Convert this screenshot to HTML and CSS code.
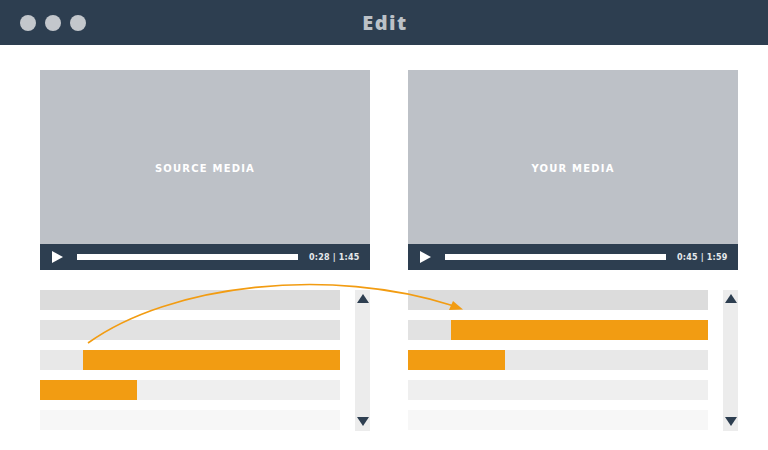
FILE: index.html
```html
<!DOCTYPE html>
<html>
<head>
<meta charset="utf-8">
<link rel="stylesheet" href="styles.css">
</head>
<body>
<div class="window">
  <header class="titlebar">
    <div class="dots"><span class="dot"></span><span class="dot"></span><span class="dot"></span></div>
    <div class="title">Edit</div>
  </header>
  <main class="content">
    <section class="panel">
      <div class="video">
        <div class="screen"><span class="label">SOURCE MEDIA</span></div>
        <div class="controls">
          <span class="play"></span>
          <span class="progress"></span>
          <span class="time">0:28 | 1:45</span>
        </div>
      </div>
      <div class="tracks">
        <div class="rows">
          <div class="row r1"></div>
          <div class="row r2"></div>
          <div class="row r3"><span class="clip" style="margin-left:43px;width:257px"></span></div>
          <div class="row r4"><span class="clip" style="width:97px"></span></div>
          <div class="row r5"></div>
        </div>
        <div class="scrollbar"><span class="arrow up"></span><span class="arrow down"></span></div>
      </div>
    </section>
    <section class="panel">
      <div class="video">
        <div class="screen"><span class="label">YOUR MEDIA</span></div>
        <div class="controls">
          <span class="play"></span>
          <span class="progress"></span>
          <span class="time">0:45 | 1:59</span>
        </div>
      </div>
      <div class="tracks">
        <div class="rows">
          <div class="row r1"></div>
          <div class="row r2"><span class="clip" style="margin-left:43px;width:257px"></span></div>
          <div class="row r3"><span class="clip" style="width:97px"></span></div>
          <div class="row r4"></div>
          <div class="row r5"></div>
        </div>
        <div class="scrollbar"><span class="arrow up"></span><span class="arrow down"></span></div>
      </div>
    </section>
  </main>
  <svg class="link" width="768" height="450" viewBox="0 0 768 450">
    <path d="M88 343 C170 284 330 266 454 306" fill="none" stroke="#f29c12" stroke-width="1.6"/>
    <path d="M463 309.5 L449 310 L453 301 Z" fill="#f29c12"/>
  </svg>
</div>
</body>
</html>
```
FILE: styles.css
```css
* { box-sizing: border-box; }
html, body { margin: 0; padding: 0; background: #ffffff; }
body { width: 768px; height: 450px; overflow: hidden; font-family: "DejaVu Sans", "Liberation Sans", sans-serif; }

.window { position: relative; width: 768px; height: 450px; }

.titlebar {
  height: 45px;
  background: #2d3e50;
  display: flex;
  align-items: center;
  position: relative;
}
.dots { display: flex; gap: 9px; padding-left: 20px; }
.dot { width: 16px; height: 16px; border-radius: 50%; background: #c3c7cc; }
.title {
  position: absolute;
  left: 0; right: 0; top: 0; bottom: 0;
  display: flex; align-items: center; justify-content: center;
  color: #bcc1c7;
  font-family: "Open Sans", "DejaVu Sans", sans-serif;
  font-weight: 800;
  font-size: 20px;
  letter-spacing: 1.5px;
  padding-left: 2px;
}

.content {
  display: flex;
  gap: 38px;
  padding: 25px 30px 0 40px;
}
.panel { width: 330px; display: flex; flex-direction: column; gap: 20px; }

.video { height: 200px; display: flex; flex-direction: column; }
.screen {
  flex: 1;
  background: #bdc1c7;
  display: flex;
  align-items: center;
  justify-content: center;
  padding-top: 22px;
}
.label {
  color: #ffffff;
  font-weight: 700;
  font-size: 10px;
  letter-spacing: 1.2px;
}
.controls {
  height: 26px;
  background: #2d3e50;
  display: flex;
  align-items: center;
  padding: 0 10px 0 12px;
}
.play {
  width: 0; height: 0;
  border-top: 6.5px solid transparent;
  border-bottom: 6.5px solid transparent;
  border-left: 11px solid #ffffff;
  margin-right: 14px;
}
.progress { width: 221px; height: 6px; background: #ffffff; margin-right: 11px; flex-shrink: 0; }
.time {
  color: #e6e9ec;
  font-size: 8px;
  font-weight: 700;
  letter-spacing: 0.2px;
  white-space: nowrap;
}

.tracks { display: flex; gap: 15px; }
.rows { width: 300px; display: flex; flex-direction: column; gap: 10px; }
.row { height: 20px; display: flex; }
.r1 { background: #dcdcdc; }
.r2 { background: #e2e2e2; }
.r3 { background: #e8e8e8; }
.r4 { background: #efefef; }
.r5 { background: #f7f7f7; }
.clip { display: block; height: 20px; background: #f29c12; }

.scrollbar {
  width: 15px;
  height: 141px;
  background: #ececec;
  display: flex;
  flex-direction: column;
  justify-content: space-between;
  align-items: center;
  padding: 4px 0 5px;
}
.arrow { width: 0; height: 0; border-left: 6px solid transparent; border-right: 6px solid transparent; }
.up { border-bottom: 9px solid #2d3e50; }
.down { border-top: 9px solid #2d3e50; }

.link { position: absolute; left: 0; top: 0; pointer-events: none; }
```
